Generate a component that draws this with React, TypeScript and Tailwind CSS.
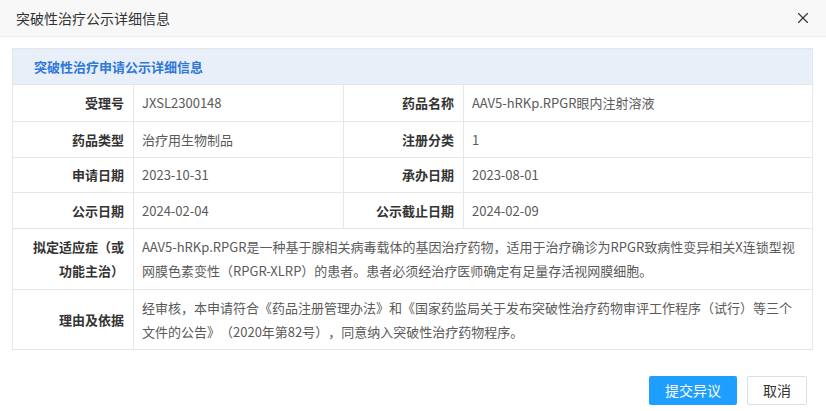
import { X } from 'lucide-react';

const font = { fontFamily: '"Microsoft YaHei", "Noto Sans CJK SC", "Noto Sans", sans-serif' };

function Label({ children, className = '' }: { children: React.ReactNode; className?: string }) {
  return (
    <td className={`border border-[#e6e6e6] px-[9px] text-right align-middle font-bold text-[#333] ${className}`}>
      {children}
    </td>
  );
}

function Value({ children, colSpan }: { children: React.ReactNode; colSpan?: number }) {
  return (
    <td colSpan={colSpan} className="border border-[#e6e6e6] px-[8px] align-middle text-[#5a5a5a]">
      {children}
    </td>
  );
}

export default function App() {
  return (
    <div className="w-[826px] h-[411px] bg-white flex flex-col [text-spacing-trim:space-all]" style={font}>
      <div className="h-[37px] bg-[#f8f8f8] border-b border-[#eee] flex items-center justify-between pl-[16px] pr-[14px] flex-shrink-0">
        <span className="text-[14px] text-[#333]">突破性治疗公示详细信息</span>
        <X size={18} strokeWidth={1.5} className="text-[#333]" />
      </div>

      <div className="px-[12px] pt-[11px]">
        <table className="w-[801px] border-collapse text-[13px] table-fixed">
          <colgroup>
            <col className="w-[121px]" />
            <col className="w-[210px]" />
            <col className="w-[120px]" />
            <col />
          </colgroup>
          <tbody>
            <tr className="h-[36px]">
              <td colSpan={4} className="border border-[#e2e7ef] bg-[#e8eff9] pl-[21px] font-bold text-[#2f77d8]">
                突破性治疗申请公示详细信息
              </td>
            </tr>
            <tr className="h-[37px]">
              <Label>受理号</Label>
              <Value>JXSL2300148</Value>
              <Label>药品名称</Label>
              <Value>AAV5-hRKp.RPGR眼内注射溶液</Value>
            </tr>
            <tr className="h-[36px]">
              <Label>药品类型</Label>
              <Value>治疗用生物制品</Value>
              <Label>注册分类</Label>
              <Value>1</Value>
            </tr>
            <tr className="h-[35px]">
              <Label>申请日期</Label>
              <Value>2023-10-31</Value>
              <Label>承办日期</Label>
              <Value>2023-08-01</Value>
            </tr>
            <tr className="h-[36px]">
              <Label>公示日期</Label>
              <Value>2024-02-04</Value>
              <Label>公示截止日期</Label>
              <Value>2024-02-09</Value>
            </tr>
            <tr className="h-[61px] leading-[24px]">
              <Label>拟定适应症（或功能主治）</Label>
              <Value colSpan={3}>
                AAV5-hRKp.RPGR是一种基于腺相关病毒载体的基因治疗药物，适用于治疗确诊为RPGR致病性变异相关X连锁型视网膜色素变性（RPGR-XLRP）的患者。患者必须经治疗医师确定有足量存活视网膜细胞。
              </Value>
            </tr>
            <tr className="h-[60px] leading-[24px]">
              <Label>理由及依据</Label>
              <Value colSpan={3}>
                经审核，本申请符合《药品注册管理办法》和《国家药监局关于发布突破性治疗药物审评工作程序（试行）等三个文件的公告》（2020年第82号），同意纳入突破性治疗药物程序。
              </Value>
            </tr>
          </tbody>
        </table>
      </div>

      <div className="flex justify-end gap-[10px] pr-[19px] pt-[26px]">
        <button className="h-[29px] w-[88px] rounded-[2px] bg-[#1e9fff] text-[14px] text-white">提交异议</button>
        <button className="h-[29px] w-[60px] rounded-[2px] border border-[#dedede] bg-white text-[14px] text-[#333]">取消</button>
      </div>
    </div>
  );
}
